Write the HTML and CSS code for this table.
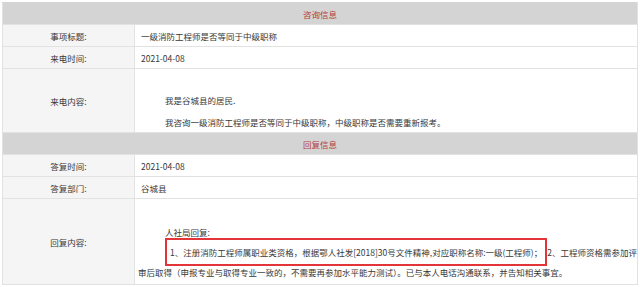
FILE: index.html
```html
<!DOCTYPE html>
<html lang="zh-CN">
<head>
<meta charset="utf-8">
<link rel="stylesheet" href="styles.css">
</head>
<body>
<div class="page">
<table class="info">
  <colgroup><col class="c-label"><col class="c-value"></colgroup>
  <tr class="head"><td colspan="2">咨询信息</td></tr>
  <tr class="row"><td class="label">事项标题:</td><td class="value">一级消防工程师是否等同于中级职称</td></tr>
  <tr class="row"><td class="label">来电时间:</td><td class="value">2021-04-08</td></tr>
  <tr class="tall"><td class="label">来电内容:</td><td class="value content1"><p class="para">我是谷城县的居民.</p><p class="para">我咨询一级消防工程师是否等同于中级职称，中级职称是否需要重新报考。</p></td></tr>
  <tr class="head"><td colspan="2">回复信息</td></tr>
  <tr class="row"><td class="label">答复时间:</td><td class="value">2021-04-08</td></tr>
  <tr class="row"><td class="label">答复部门:</td><td class="value">谷城县</td></tr>
  <tr class="tall"><td class="label">回复内容:</td><td class="value content2"><p class="para first">人社局回复:</p><p class="para reply"><span class="mark">1、注册消防工程师属职业类资格，根据鄂人社发[2018]30号文件精神,对应职称名称:一级(工程师)；</span>2、工程师资格需参加评<br>审后取得（申报专业与取得专业一致的，不需要再参加水平能力测试）。已与本人电话沟通联系，并告知相关事宜。</p></td></tr>
</table>
</div>
</body>
</html>
```
FILE: styles.css
```css
html, body {
  margin: 0;
  padding: 0;
  background: #ffffff;
}
.page {
  padding: 2px 0 0 2px;
}
.info {
  border-collapse: collapse;
  table-layout: fixed;
  width: 636px;
  font-family: "Noto Sans CJK SC", "Noto Sans", sans-serif;
  font-size: 8.5px;
  color: #383838;
}
.c-label { width: 132px; }
.info td {
  border: 1px solid #e2e2e2;
  padding: 0;
}
.head td {
  height: 21px;
  background: #d4d4d4;
  color: #b2403a;
  text-align: center;
  border-color: #d4d4d4 #e2e2e2 #e2e2e2 #e2e2e2;
}
.row td { height: 21px; }
.label {
  background: #f5f5f5;
  text-align: center;
}
.value {
  padding-left: 6px !important;
  text-align: left;
}
.para {
  margin: 0;
  line-height: 20px;
  text-indent: 24px;
}
.content1 {
  vertical-align: top;
  padding-top: 21px !important;
}
.content1 .para + .para { margin-top: 2px; }
.content2 {
  vertical-align: top;
  padding-top: 23px !important;
  padding-bottom: 2px !important;
  padding-left: 3px !important;
}
.content2 .first { padding-left: 3px; }
.reply { text-indent: 27px; }
.mark {
  border: 2px solid #e3343a;
  padding: 6px 3px;
}
```
